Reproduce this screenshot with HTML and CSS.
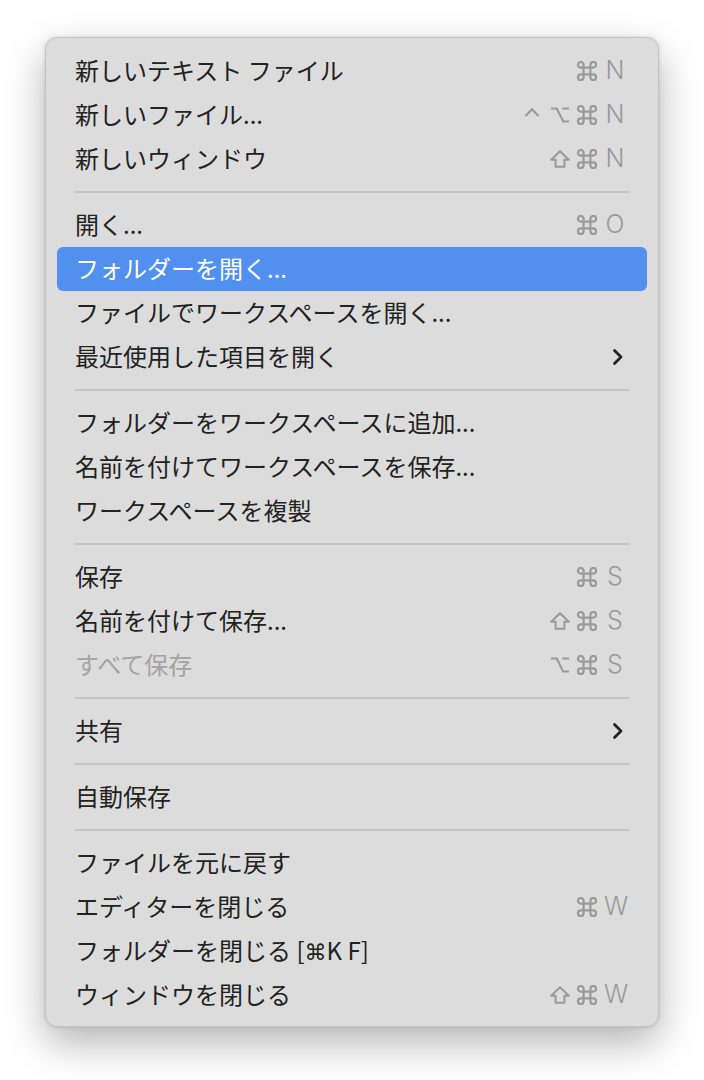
FILE: index.html
```html
<!DOCTYPE html>
<html lang="ja">
<head>
  <meta charset="UTF-8">
  <meta name="viewport" content="width=device-width, initial-scale=1.0">
  <title>ファイル メニュー</title>
  <link rel="stylesheet" href="styles.css">
</head>
<body>
  <!-- modifier key symbols, reused below -->
  <svg class="defs" width="0" height="0">
    <defs>
      <symbol id="cmd" viewBox="1.2 1.2 17.6 17.6"><path d="M7 7 V4.5 A2.5 2.5 0 1 0 4.5 7 H15.5 A2.5 2.5 0 1 0 13 4.5 V15.5 A2.5 2.5 0 1 0 15.5 13 H4.5 A2.5 2.5 0 1 0 7 15.5 Z" fill="none" stroke="currentColor" stroke-width="1.9"/></symbol>
      <symbol id="shift" viewBox="0 0 20 20"><path d="M10 2.2 L18.8 10.8 H14.4 V17.8 H5.6 V10.8 H1.2 Z" fill="none" stroke="currentColor" stroke-width="2" stroke-linejoin="round"/></symbol>
      <symbol id="opt" viewBox="0 0 20 20"><path d="M1 3.5 H6.8 L13.2 16.5 H19 M12.2 3.5 H19" fill="none" stroke="currentColor" stroke-width="2.1"/></symbol>
      <symbol id="ctrl" viewBox="0 0 20 20"><path d="M2.5 11 L9 4.2 L15.5 11" fill="none" stroke="currentColor" stroke-width="2.1"/></symbol>
      <symbol id="chev" viewBox="0 0 12 18"><path d="M2.5 2.5 L9 9 L2.5 15.5" fill="none" stroke="currentColor" stroke-width="2.8" stroke-linecap="round" stroke-linejoin="round"/></symbol>
    </defs>
  </svg>

  <div class="menu">
    <div class="item"><span class="label">新しいテキスト ファイル</span><span class="keys"><svg class="mod"><use href="#cmd"/></svg><span class="key">N</span></span></div>
    <div class="item"><span class="label">新しいファイル...</span><span class="keys"><svg class="mod"><use href="#ctrl"/></svg><svg class="mod"><use href="#opt"/></svg><svg class="mod"><use href="#cmd"/></svg><span class="key">N</span></span></div>
    <div class="item"><span class="label">新しいウィンドウ</span><span class="keys"><svg class="mod"><use href="#shift"/></svg><svg class="mod"><use href="#cmd"/></svg><span class="key">N</span></span></div>
    <div class="sep"></div>

    <div class="item"><span class="label">開く...</span><span class="keys"><svg class="mod"><use href="#cmd"/></svg><span class="key">O</span></span></div>
    <div class="item active"><span class="label">フォルダーを開く...</span></div>
    <div class="item"><span class="label">ファイルでワークスペースを開く...</span></div>
    <div class="item"><span class="label">最近使用した項目を開く</span><svg class="chevron"><use href="#chev"/></svg></div>
    <div class="sep"></div>

    <div class="item"><span class="label">フォルダーをワークスペースに追加...</span></div>
    <div class="item"><span class="label">名前を付けてワークスペースを保存...</span></div>
    <div class="item"><span class="label">ワークスペースを複製</span></div>
    <div class="sep"></div>

    <div class="item"><span class="label">保存</span><span class="keys"><svg class="mod"><use href="#cmd"/></svg><span class="key">S</span></span></div>
    <div class="item"><span class="label">名前を付けて保存...</span><span class="keys"><svg class="mod"><use href="#shift"/></svg><svg class="mod"><use href="#cmd"/></svg><span class="key">S</span></span></div>
    <div class="item disabled"><span class="label">すべて保存</span><span class="keys"><svg class="mod"><use href="#opt"/></svg><svg class="mod"><use href="#cmd"/></svg><span class="key">S</span></span></div>
    <div class="sep"></div>

    <div class="item"><span class="label">共有</span><svg class="chevron"><use href="#chev"/></svg></div>
    <div class="sep"></div>

    <div class="item"><span class="label">自動保存</span></div>
    <div class="sep"></div>

    <div class="item"><span class="label">ファイルを元に戻す</span></div>
    <div class="item"><span class="label">エディターを閉じる</span><span class="keys"><svg class="mod"><use href="#cmd"/></svg><span class="key">W</span></span></div>
    <div class="item"><span class="label">フォルダーを閉じる [<span class="sym">⌘</span>K F]</span></div>
    <div class="item"><span class="label">ウィンドウを閉じる</span><span class="keys"><svg class="mod"><use href="#shift"/></svg><svg class="mod"><use href="#cmd"/></svg><span class="key">W</span></span></div>
  </div>
</body>
</html>
```

FILE: styles.css
```css
* {
  margin: 0;
  padding: 0;
  box-sizing: border-box;
}

body {
  background-color: #fff;
  padding: 37px 0 60px 45px;
  font-family: "Noto Sans CJK JP", sans-serif;
}

.defs {
  position: absolute;
}

.menu {
  width: 614px;
  padding: 11px 0 9px;
  background-color: #dcdcdc;
  border: 1px solid #c2c2c2;
  border-radius: 12px;
  box-shadow: 0 16px 40px rgba(0, 0, 0, 0.3), 0 0 4px rgba(0, 0, 0, 0.12);
}

.item {
  height: 44px;
  margin: 0 11px;
  padding: 0 21px 3px 18px;
  display: flex;
  justify-content: space-between;
  align-items: center;
  border-radius: 6px;
  color: #222;
  font-size: 24px;
}

.label {
  white-space: nowrap;
}

.sym {
  font-family: "DejaVu Sans", sans-serif;
  font-size: 22px;
}

.item.active {
  background-color: #5290f0;
  color: #fff;
}

.item.disabled .label {
  color: #a3a3a3;
}

.keys {
  display: flex;
  align-items: center;
  gap: 7px;
  padding-top: 2px;
  color: #999;
}

.mod {
  width: 20px;
  height: 20px;
}

.key {
  width: 22px;
  text-align: center;
  font-family: Inter, "Liberation Sans", sans-serif;
  font-size: 25px;
  font-weight: 300;
  line-height: 1;
}

.chevron {
  width: 12px;
  height: 18px;
  margin: 3px 2px 0 0;
  color: #222;
}

.sep {
  height: 2px;
  margin: 10px 29px;
  background-color: #c4c4c4;
}
```
